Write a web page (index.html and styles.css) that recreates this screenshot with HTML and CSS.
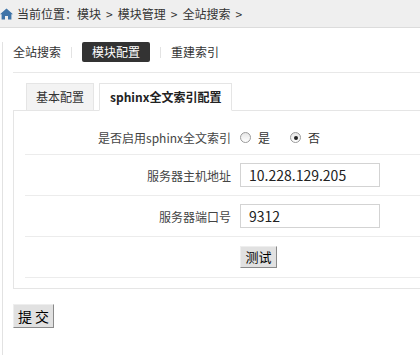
FILE: index.html
```html
<!DOCTYPE html>
<html lang="zh-CN">
<head>
    <meta charset="UTF-8">
    <title>全站搜索</title>
    <link rel="stylesheet" href="styles.css">
</head>
<body>
<div class="crumb">
    <svg class="icon-home" width="13" height="12" viewBox="0 0 13 12">
        <path d="M6.5 0.5 L0 6.2 L1.6 6.2 L1.6 11.5 L5 11.5 L5 8 L8 8 L8 11.5 L11.4 11.5 L11.4 6.2 L13 6.2 Z" fill="#3f74a8"/>
    </svg>
    <span>当前位置：模块</span><span class="arrow">&gt;</span><span>模块管理</span><span class="arrow">&gt;</span><span>全站搜索</span><span class="arrow">&gt;</span>
</div>
<div class="main">
    <div class="sub-nav">
        <a class="sub-item" href="#">全站搜索</a>
        <span class="sep"></span>
        <a class="sub-item active" href="#">模块配置</a>
        <span class="sep"></span>
        <a class="sub-item" href="#">重建索引</a>
    </div>

    <div class="tabs">
        <span class="tab">基本配置</span>
        <span class="tab current">sphinx全文索引配置</span>
    </div>
    <div class="panel">
        <div class="row row-first">
            <label class="row-label">是否启用sphinx全文索引</label>
            <div class="row-field">
                <label class="radio"><input type="radio" name="enable">是</label>
                <label class="radio"><input type="radio" name="enable" checked>否</label>
            </div>
        </div>
        <div class="row">
            <label class="row-label">服务器主机地址</label>
            <div class="row-field"><input class="input-text" type="text" value="10.228.129.205"></div>
        </div>
        <div class="row">
            <label class="row-label">服务器端口号</label>
            <div class="row-field"><input class="input-text" type="text" value="9312"></div>
        </div>
        <div class="row">
            <label class="row-label"></label>
            <div class="row-field"><button class="btn btn-test">测试</button></div>
        </div>
    </div>

    <button class="btn btn-submit">提 交</button>
</div>
</body>
</html>
```

FILE: styles.css
```css
* {
    margin: 0;
    padding: 0;
    box-sizing: border-box;
}

html,
body {
    width: 100%;
    height: 100%;
    overflow: hidden;
}

body {
    font: 12px "Noto Sans CJK SC", sans-serif;
    color: #333;
    background-color: #fff;
}

a {
    color: #333;
    text-decoration: none;
}

/* 顶部位置条 */
.crumb {
    height: 28px;
    padding: 5px 0 4px;
    background-color: #efefef;
    border-bottom: 1px solid #dcdcdc;
    display: flex;
    align-items: center;
    line-height: 16px;
}

.icon-home {
    margin-right: 4px;
}

.arrow {
    margin: 0 5px;
}

.main {
    margin-left: 2px;
    height: 330px;
    padding-left: 10px;
    border-left: 1px solid #e2e2e2;
}

/* 子菜单 */
.sub-nav {
    display: flex;
    align-items: center;
    margin-top: 14px;
    padding-bottom: 10px;
    border-bottom: 1px solid #e8e8e8;
}

.sub-item {
    height: 20px;
    line-height: 20px;
}

.sub-item.active {
    padding: 0 10px;
    background-color: #333;
    color: #fff;
    border-radius: 2px;
}

.sep {
    width: 1px;
    height: 11px;
    margin: 0 10px;
    background-color: #e3e3e3;
}

/* 选项卡 */
.tabs {
    display: flex;
    margin: 10px 0 -1px 13px;
    position: relative;
}

.tab {
    height: 28px;
    line-height: 26px;
    padding: 0 9px;
    margin-right: 5px;
    border: 1px solid #e5e5e5;
    background-color: #f3f3f3;
    color: #333;
}

.tab.current {
    padding: 0 10px;
    background-color: #fff;
    border-bottom-color: #fff;
    font-weight: bold;
    color: #222;
}

.panel {
    border: 1px solid #e5e5e5;
    border-right: none;
    padding: 10px 0 10px 11px;
}

.row {
    display: flex;
    align-items: center;
    height: 41px;
    border-bottom: 1px solid #ececec;
}

.row-first {
    height: 34px;
}

.row-label {
    width: 215px;
    padding-right: 9px;
    text-align: right;
    color: #444;
}

.row-field {
    display: flex;
    align-items: center;
}

.radio {
    display: flex;
    align-items: center;
    margin-right: 20px;
    color: #333;
}

.radio input {
    appearance: none;
    -webkit-appearance: none;
    width: 11px;
    height: 11px;
    margin-right: 7px;
    border: 1px solid #9a9a9a;
    border-radius: 50%;
    background: linear-gradient(#e6e6e6, #fff);
    display: flex;
    align-items: center;
    justify-content: center;
}

.radio input:checked::after {
    content: "";
    width: 4px;
    height: 4px;
    border-radius: 50%;
    background-color: #222;
}

.input-text {
    width: 140px;
    height: 24px;
    padding: 0 8px;
    border: 1px solid #d3d3d3;
    font: 14px "Noto Sans CJK SC", sans-serif;
    color: #222;
    outline: none;
}

/* 按钮 */
.btn {
    background-color: #e1e1e1;
    border: 1px solid;
    border-color: #eee #8a8a8a #8a8a8a #eee;
    color: #000;
    cursor: pointer;
    font-family: "Noto Sans CJK SC", sans-serif;
}

.btn-test {
    width: 37px;
    height: 22px;
    font-size: 13px;
    line-height: 18px;
}

.btn-submit {
    display: block;
    margin-top: 15px;
    width: 41px;
    height: 24px;
    font-size: 14px;
    line-height: 20px;
}
```
